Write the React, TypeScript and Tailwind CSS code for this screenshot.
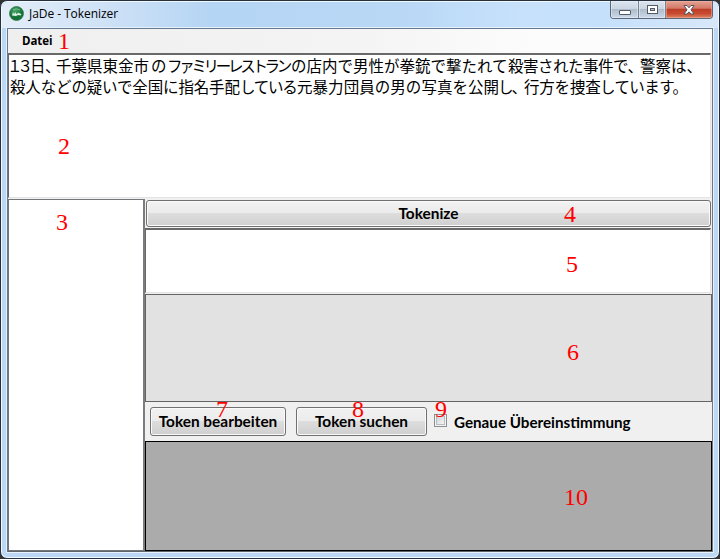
import type { ReactNode } from "react";

type Run = { text: string; cls: string };

const firstLine: Run[] = [
  { text: "１３", cls: "-ml-[3px] w-[23px] tracking-[-5px]" },
  { text: "日、", cls: "w-[26px] tracking-[-0.5px]" },
  { text: "千葉県東金市", cls: "w-[95px]" },
  { text: "の", cls: "w-[16px]" },
  { text: "ファミリーレストラン", cls: "w-[124px] tracking-[-3.3px]" },
  { text: "の店内で男性が拳銃で撃たれて", cls: "w-[217px]" },
  { text: "殺害された", cls: "w-[75px] tracking-[-0.5px]" },
  { text: "事件で、", cls: "w-[57px] tracking-[-0.5px]" },
  { text: "警察は、", cls: "w-[60px]" },
];

const secondLine: Run[] = [
  { text: "殺人などの疑いで全国に指名手配", cls: "w-[230px] tracking-[-0.15px]" },
  { text: "している", cls: "w-[57px] tracking-[-1.3px]" },
  { text: "元暴力団員の男の写真を公開", cls: "w-[202px] tracking-[0.05px]" },
  { text: "し、", cls: "-ml-px w-[26px] tracking-[-2px]" },
  { text: "行方を捜査", cls: "w-[76px] tracking-[-0.2px]" },
  { text: "しています。", cls: "w-[90px] tracking-[-0.6px]" },
];

function Line({ runs }: { runs: Run[] }) {
  return (
    <div className="flex h-[21px] whitespace-nowrap">
      {runs.map((run) => (
        <span key={run.text} className={`shrink-0 ${run.cls}`}>
          {run.text}
        </span>
      ))}
    </div>
  );
}

function Button({ children, className }: { children: ReactNode; className: string }) {
  return (
    <button
      className={`flex items-center justify-center rounded-[3px] border border-[#707070] bg-[linear-gradient(#f2f2f2_0%,#ebebeb_49%,#dddddd_50%,#cfcfcf_100%)] pt-px font-[Lato,sans-serif] text-[15.4px] font-bold whitespace-nowrap text-black shadow-[inset_0_0_0_1px_#fafafa] ${className}`}
    >
      {children}
    </button>
  );
}

function Marker({ n, at }: { n: number; at: string }) {
  return (
    <span
      className={`pointer-events-none absolute font-['Liberation_Serif',serif] text-[24px] leading-[24px] text-[#ff0000] ${at}`}
    >
      {n}
    </span>
  );
}

export default function App() {
  return (
    <div className="relative h-[559px] w-[720px] overflow-hidden bg-[#333]">
      <div className="flex h-[559px] w-[720px] flex-col overflow-hidden rounded-[7px] border border-[#27313d] bg-[#bcd8f5] px-[7px] pb-[6px] shadow-[inset_0_0_0_1px_#f0f9ff]">
        <header className="-mx-[6px] mt-px flex h-[26px] shrink-0 items-start rounded-t-[6px] bg-[linear-gradient(90deg,#e3edf8_0px,#cfe2f6_100px,#b5d5f4_210px,#b9d8f6_400px,#c7e1fb_520px,#c5e0fb_600px,#d8e8f9_719px)] px-[6px]">
          <svg className="mt-[4px] ml-px h-[15px] w-[15px] shrink-0" viewBox="0 0 15 15">
            <defs>
              <radialGradient id="globe" cx="40%" cy="30%">
                <stop offset="0" stopColor="#4ba669" />
                <stop offset="1" stopColor="#127136" />
              </radialGradient>
            </defs>
            <circle cx="7.5" cy="7.5" r="7" fill="url(#globe)" stroke="#2f7046" strokeWidth=".7" />
            <path d="M3 9.5 4 6 5 8 6.5 6.2 7.3 8.1 9.7 6.8 12.5 8.3 11.5 9.5 9 9 7 10Z" fill="#d9f0df" />
            <path d="M4 4Q7 1.5 11 4" fill="none" stroke="#75bd89" />
          </svg>
          <h1 className="mt-[3px] ml-[5px] grow font-['Open_Sans',sans-serif] text-[12px] leading-[18px] font-normal tracking-[-0.06px] text-black">
            JaDe - Tokenizer
          </h1>
          <div className="-mt-px mr-[-1px] flex h-[18px] w-[103px] overflow-hidden rounded-b-[4px] border border-t-0 border-[#5c6878]">
            <button className="flex w-[28px] items-center justify-center border-r border-[#768392] bg-[linear-gradient(#dce5ef_0%,#cbd6e2_45%,#aebccb_50%,#cbdaea_100%)] shadow-[inset_0_0_0_1px_#edf4fb80]">
              <svg width="14" height="14" viewBox="0 0 14 14">
                <rect x="1.5" y="7.5" width="11" height="4" rx=".5" fill="#fff" stroke="#555b66" />
              </svg>
            </button>
            <button className="flex w-[27px] items-center justify-center border-r border-[#768392] bg-[linear-gradient(#dce5ef_0%,#cbd6e2_45%,#aebccb_50%,#cbdaea_100%)] shadow-[inset_0_0_0_1px_#edf4fb80]">
              <svg width="13" height="12" viewBox="0 0 13 12">
                <rect x="1.5" y="1.5" width="10" height="8" fill="#fff" stroke="#555b66" />
                <rect x="4.5" y="4.5" width="4" height="2" fill="#b4c1d0" stroke="#555b66" />
              </svg>
            </button>
            <button className="flex grow items-center justify-center bg-[linear-gradient(#e5a294_0%,#d47a68_42%,#bd3e28_50%,#c84c31_75%,#df8662_100%)] shadow-[inset_0_0_0_1px_#f1b6a980]">
              <svg width="14" height="12" viewBox="0 0 14 12">
                <path d="M2 1.5h3l2 2.3 2-2.3h3L9 5.8l3 4.2H9L7 7.8 5 10H2l3-4.2Z" fill="#fff" stroke="#535666" strokeLinejoin="round" />
              </svg>
            </button>
          </div>
        </header>

        <main className="-ml-px flex h-[524px] w-[706px] shrink-0 flex-col border border-t-[#667b91] border-r-[#72787e] border-b-[#60656a] border-l-[#667b91] bg-[#f0f0f0] shadow-[0_0_0_1px_#e6f1fc]">
          <nav className="flex h-[24px] shrink-0 items-center bg-[linear-gradient(90deg,#efefef,#f4f4f4_50%,#fcfcfc_75%)] pl-[14px]">
            <span className="font-['Open_Sans',sans-serif] text-[11.5px] leading-[20px] font-bold tracking-[-0.05px]">Datei</span>
          </nav>
          <section className="h-[145px] w-[703px] shrink-0 border border-t-2 border-t-[#696969] border-r-[#e3e3e3] border-b-[#e3e3e3] border-l-[#696969] bg-white pl-[1px] font-['Noto_Sans_CJK_JP',sans-serif] text-[15.5px] leading-[20px] text-black">
            <Line runs={firstLine} />
            <Line runs={secondLine} />
          </section>

          <div className="mt-px flex h-[352px] shrink-0">
            <aside className="h-[352px] w-[137px] shrink-0 border border-t-[#74777a] border-r-2 border-r-[#7b7d82] border-b-[#74777a] border-l-[#74777a] bg-white" />
            <div className="flex w-[567px] shrink-0 flex-col">
              <Button className="mt-[1px] ml-[1px] h-[27px] w-[565px] shrink-0">Tokenize</Button>
              <section className="mt-[1px] h-[65px] w-[566px] shrink-0 border border-t-2 border-t-[#696969] border-r-[#e3e3e3] border-b-[#e3e3e3] border-l-[#696969] bg-white" />
              <section className="mt-px h-[108px] shrink-0 border border-[#646464] bg-[#e2e2e2]" />
              <div className="flex h-[39px] shrink-0 items-start pt-[5px] pl-[5px]">
                <Button className="h-[29px] w-[136px]">Token bearbeiten</Button>
                <Button className="ml-[10px] h-[29px] w-[131px]">Token suchen</Button>
                <label className="ml-[7px] flex h-[29px] items-center">
                  <span className="mb-[3px] flex h-[13px] w-[13px] border border-[#8e8f8f] bg-[#f4f4f4] p-[1px]">
                    <span className="h-full w-full border border-[#b7bcc2] bg-[linear-gradient(135deg,#cfd4d9,#f6f6f6)]" />
                  </span>
                  <span className="ml-[7px] font-[Lato,sans-serif] text-[15.2px] leading-[20px] font-bold whitespace-nowrap">
                    Genaue Übereinstimmung
                  </span>
                </label>
              </div>
              <section className="h-[110px] shrink-0 border border-black bg-[#ababab]" />
            </div>
          </div>
        </main>
      </div>

      <Marker n={1} at="left-[58px] top-[29px]" />
      <Marker n={2} at="left-[58px] top-[134px]" />
      <Marker n={3} at="left-[56px] top-[210px]" />
      <Marker n={4} at="left-[564px] top-[202px]" />
      <Marker n={5} at="left-[566px] top-[252px]" />
      <Marker n={6} at="left-[567px] top-[340px]" />
      <Marker n={7} at="left-[216px] top-[397px]" />
      <Marker n={8} at="left-[352px] top-[397px]" />
      <Marker n={9} at="left-[435px] top-[397px]" />
      <Marker n={10} at="left-[564px] top-[485px]" />
    </div>
  );
}
